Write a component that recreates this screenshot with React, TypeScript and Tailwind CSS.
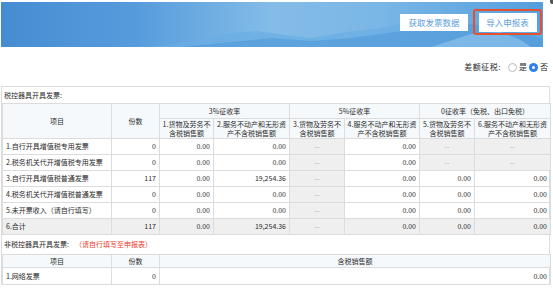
import React from "react";

const font = { fontFamily: '"Noto Sans CJK SC", "Noto Sans", sans-serif' };

const td = "border border-[#dcdcdc] px-[3px] leading-[9px]";
const th = "border border-[#dcdcdc] px-0 leading-[9px] font-normal";
const num = `${td} text-right`;
const gray = `${td} bg-[#efefef] text-center text-[#aaa]`;

type Row = { name: string; n: string; v: string[] };

const rows: Row[] = [
  { name: "1.自行开具增值税专用发票", n: "0", v: ["0.00", "0.00", "--", "0.00", "--", "--"] },
  { name: "2.税务机关代开增值税专用发票", n: "0", v: ["0.00", "0.00", "--", "0.00", "--", "--"] },
  { name: "3.自行开具增值税普通发票", n: "117", v: ["0.00", "19,254.36", "--", "0.00", "0.00", "0.00"] },
  { name: "4.税务机关代开增值税普通发票", n: "0", v: ["0.00", "0.00", "--", "0.00", "0.00", "0.00"] },
  { name: "5.未开票收入（请自行填写）", n: "0", v: ["0.00", "0.00", "--", "0.00", "0.00", "0.00"] },
];

function Banner() {
  return (
    <div className="relative mt-[2px] ml-[1px] h-[45px] w-[542px] overflow-hidden bg-[linear-gradient(90deg,#468cd2_0%,#569cdc_25%,#84bce8_50%,#7ab6e6_70%,#559fde_100%)]">
      <svg className="absolute inset-0" width="542" height="45" viewBox="0 0 542 45">
        <path d="M150 45 L200 38 L230 31 L255 29 L285 33 L310 36 L345 30 L380 26 L420 18 L455 13 L490 18 L520 26 L542 30 L542 45 Z" fill="#6aaee4" opacity="0.7" />
        <path d="M180 45 L230 40 L270 36 L310 39 L350 36 L395 30 L430 24 L470 22 L505 28 L542 36 L542 45 Z" fill="#4d97d9" opacity="0.55" />
        <path d="M430 45 L470 32 L500 30 L520 38 L530 45 Z" fill="#9fcdf0" opacity="0.5" />
      </svg>
      <div className="absolute top-[12px] left-[399px] flex h-[17px] w-[68px] items-center justify-center bg-white text-[8.5px] text-[#5a9ee0]">
        获取发票数据
      </div>
      <div className="absolute top-[7px] left-[472px] flex h-[26px] w-[69px] items-center justify-center rounded-[3px] border-2 border-[#e6502f]">
        <div className="flex h-[19px] w-[58px] items-center justify-center bg-white text-[8.5px] text-[#5a9ee0]">导入申报表</div>
      </div>
    </div>
  );
}

export default function App() {
  return (
    <div className="relative h-[288px] w-[553px] overflow-hidden bg-white text-[7px] text-[#2a2a2a]" style={font}>
      <div className="absolute top-0 right-0 h-[4px] w-[3px] bg-[#555] rounded-bl-[2px]" />
      <Banner />
      <div className="mt-[13px] flex h-[14px] items-center justify-end pr-[5px] text-[8px]">
        <span className="mr-[7px] tracking-[0.5px]">差额征税:</span>
        <span className="mr-[2px] inline-block h-[9px] w-[9px] rounded-full border border-[#bbb] bg-white" />
        <span className="mr-[2px]">是</span>
        <span className="mr-[2px] flex h-[9px] w-[9px] items-center justify-center rounded-full bg-[#2f80ed]">
          <span className="h-[3px] w-[3px] rounded-full bg-white" />
        </span>
        <span>否</span>
      </div>
      <div className="mt-[12px] ml-[1px] w-[549px] border-t border-l border-r border-[#dcdcdc]">
        <div className="flex h-[16px] items-center pl-[2px]">税控器具开具发票:</div>
        <table className="w-[549px] table-fixed border-collapse">
          <colgroup>
            <col className="w-[109px]" />
            <col className="w-[48px]" />
            <col className="w-[54px]" />
            <col className="w-[76px]" />
            <col className="w-[55px]" />
            <col className="w-[75px]" />
            <col className="w-[55px]" />
            <col className="w-[76px]" />
          </colgroup>
          <thead className="bg-[#f5f9fc]">
            <tr className="h-[15px]">
              <th rowSpan={2} className={th}>项目</th>
              <th rowSpan={2} className={th}>份数</th>
              <th colSpan={2} className={th}>3%征收率</th>
              <th colSpan={2} className={th}>5%征收率</th>
              <th colSpan={2} className={th}>0征收率（免税、出口免税）</th>
            </tr>
            <tr className="h-[20px]">
              <th className={th}>1.货物及劳务不含税销售额</th>
              <th className={th}>2.服务不动产和无形资产不含税销售额</th>
              <th className={th}>3.货物及劳务不含税销售额</th>
              <th className={th}>4.服务不动产和无形资产不含税销售额</th>
              <th className={th}>5.货物及劳务不含税销售额</th>
              <th className={th}>6.服务不动产和无形资产不含税销售额</th>
            </tr>
          </thead>
          <tbody>
            {rows.map((r) => (
              <tr key={r.name} className="h-[16px]">
                <td className={td}>{r.name}</td>
                <td className={num}>{r.n}</td>
                {r.v.map((v, i) =>
                  v === "--" ? (
                    <td key={i} className={gray}>--</td>
                  ) : (
                    <td key={i} className={num}>{v}</td>
                  )
                )}
              </tr>
            ))}
            <tr className="h-[16px] bg-[#efefef]">
              <td className={td}>6.合计</td>
              <td className={num}>117</td>
              <td className={num}>0.00</td>
              <td className={num}>19,254.36</td>
              <td className={`${td} text-center text-[#aaa]`}>--</td>
              <td className={num}>0.00</td>
              <td className={num}>0.00</td>
              <td className={num}>0.00</td>
            </tr>
          </tbody>
        </table>
        <div className="flex h-[19px] items-center pl-[2px]">
          非税控器具开具发票:<span className="ml-[6px] text-[#f03a2e]">（请自行填写至申报表）</span>
        </div>
        <table className="w-[549px] table-fixed border-collapse">
          <colgroup>
            <col className="w-[109px]" />
            <col className="w-[48px]" />
            <col />
          </colgroup>
          <tbody>
            <tr className="h-[13px] bg-[#f5f9fc]">
              <td className={`${td} text-center`}>项目</td>
              <td className={`${td} text-center`}>份数</td>
              <td className={`${td} text-center`}>含税销售额</td>
            </tr>
            <tr className="h-[17px]">
              <td className={td}>1.网络发票</td>
              <td className={num}>0</td>
              <td className={num}>0.00</td>
            </tr>
          </tbody>
        </table>
      </div>
    </div>
  );
}
